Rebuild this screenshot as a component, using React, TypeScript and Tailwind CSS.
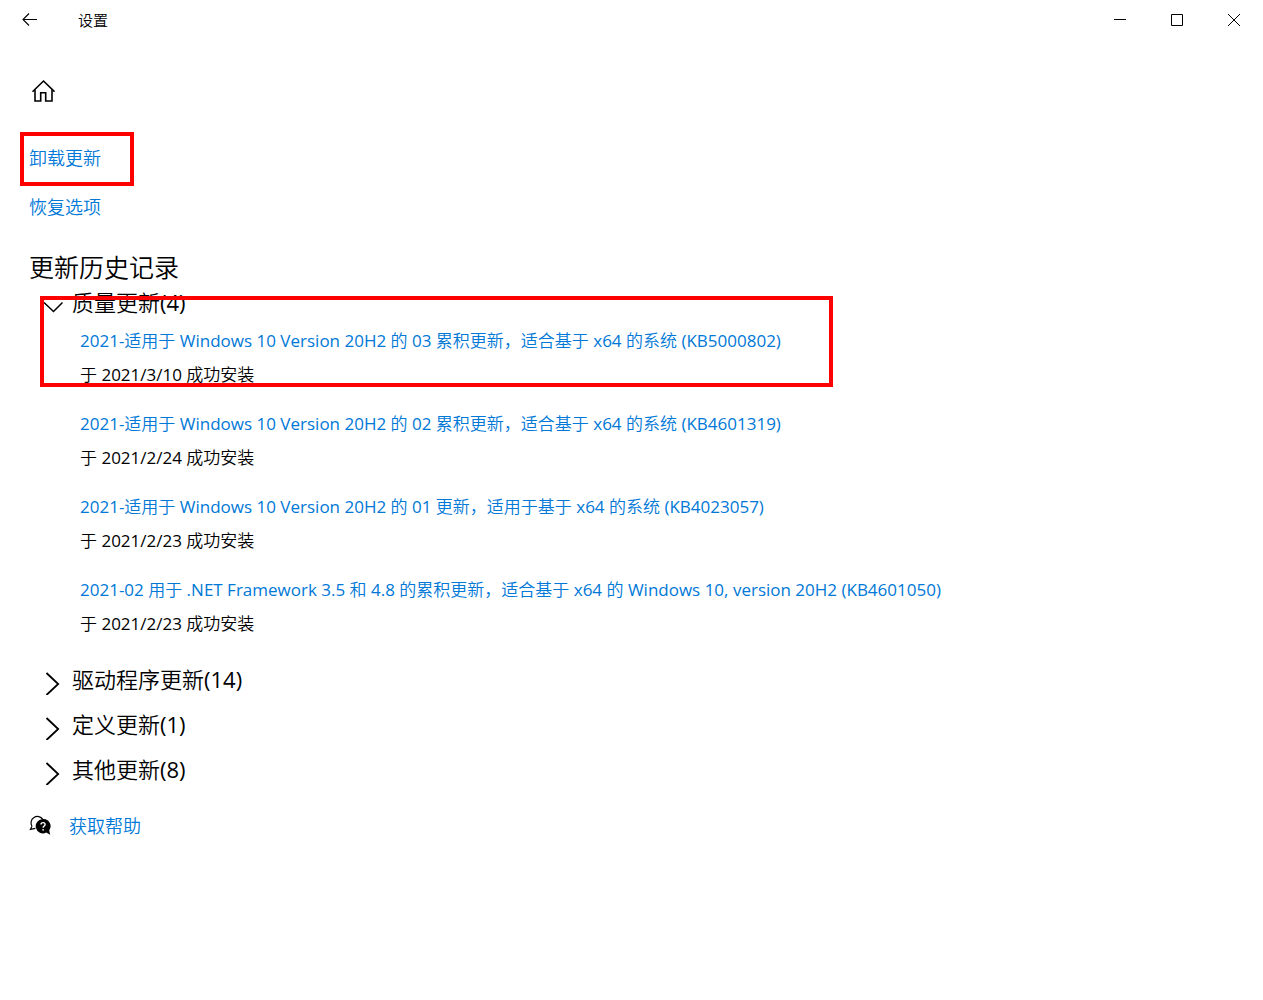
const qualityUpdates = [
  {
    title: '2021-适用于 Windows 10 Version 20H2 的 03 累积更新，适合基于 x64 的系统 (KB5000802)',
    status: '于 2021/3/10 成功安装',
    highlighted: true,
  },
  {
    title: '2021-适用于 Windows 10 Version 20H2 的 02 累积更新，适合基于 x64 的系统 (KB4601319)',
    status: '于 2021/2/24 成功安装',
  },
  {
    title: '2021-适用于 Windows 10 Version 20H2 的 01 更新，适用于基于 x64 的系统 (KB4023057)',
    status: '于 2021/2/23 成功安装',
  },
  {
    title: '2021-02 用于 .NET Framework 3.5 和 4.8 的累积更新，适合基于 x64 的 Windows 10, version 20H2 (KB4601050)',
    status: '于 2021/2/23 成功安装',
  },
];

const collapsedSections = ['驱动程序更新(14)', '定义更新(1)', '其他更新(8)'];

function BackIcon() {
  return (
    <svg width="16" height="14" viewBox="0 0 16 14" fill="none" stroke="currentColor" strokeWidth="1.1" aria-hidden="true">
      <path d="M15 6.5H.8M7 .5l-6 6 6 6" />
    </svg>
  );
}

function HomeIcon() {
  return (
    <svg width="26" height="24" viewBox="0 0 26 24" fill="none" stroke="currentColor" strokeWidth="1.6" aria-hidden="true">
      <path d="M3.5 12.7L14.5 2l11 10.7" />
      <path d="M6 10.8V22h5.7v-8.2h5V22H23V10.8" />
    </svg>
  );
}

function ChevronDownIcon() {
  return (
    <svg width="20" height="24" viewBox="0 0 20 24" fill="none" stroke="currentColor" strokeWidth="1.5" aria-hidden="true">
      <path d="M1 12.5l9.5 9 9-9" />
    </svg>
  );
}

function ChevronRightIcon() {
  return (
    <svg width="20" height="32" viewBox="0 0 20 32" fill="none" stroke="currentColor" strokeWidth="1.8" aria-hidden="true">
      <path d="M3.5 10l11.7 11L3.5 32" />
    </svg>
  );
}

function HelpIcon() {
  return (
    <svg width="22" height="22" viewBox="0 0 22 22" aria-hidden="true">
      <path d="M3 11.2A6.3 6.3 0 1 1 13.8 4.4M3 11.2L1.4 14.4l5-1" fill="none" stroke="currentColor" strokeWidth="1.2" />
      <path d="M14 4a7.2 7.2 0 1 0 3.2 13.6l4 2.2-1-4.4A7.2 7.2 0 0 0 14 4z" fill="currentColor" />
      <path d="M12 9.5c0-2.6 4.1-2.5 4.1 0 0 1.5-2 1.6-2 3.3" fill="none" stroke="white" strokeWidth="1.4" />
      <circle cx="14.1" cy="14.8" r="0.9" fill="white" />
    </svg>
  );
}

function TitleBar() {
  return (
    <header className="flex h-10 items-center">
      <button type="button" aria-label="返回" className="flex h-10 w-[59px] items-center justify-center">
        <BackIcon />
      </button>
      <h1 className="ml-[19px] text-[15px] leading-6">设置</h1>
      <div className="ml-auto flex">
        <button type="button" aria-label="最小化" className="flex h-10 w-[57px] items-center justify-center">
          <svg width="13" height="13" viewBox="0 0 13 13" stroke="currentColor" aria-hidden="true">
            <path d="M0 5.5h12" />
          </svg>
        </button>
        <button type="button" aria-label="最大化" className="flex h-10 w-[57px] items-center justify-center">
          <svg width="13" height="13" viewBox="0 0 13 13" fill="none" stroke="currentColor" aria-hidden="true">
            <path d="M.5.5h11v11H.5z" />
          </svg>
        </button>
        <button type="button" aria-label="关闭" className="flex h-10 w-[57px] items-center justify-center">
          <svg width="13" height="13" viewBox="0 0 13 13" stroke="currentColor" aria-hidden="true">
            <path d="M0 0l12 12M12 0L0 12" />
          </svg>
        </button>
      </div>
    </header>
  );
}

export default function App() {
  return (
    <div className="min-h-screen bg-white font-['Open_Sans','Noto_Sans_CJK_SC_DemiLight','Noto_Sans_CJK_SC',sans-serif] text-black">
      <TitleBar />
      <main className="px-[29px] pt-[39px]">
        <button type="button" aria-label="主页" className="block">
          <HomeIcon />
        </button>

        <nav className="mt-[43px] flex flex-col items-start gap-[25px] text-[18px] leading-6 text-[#0078d7]">
          <a href="#uninstall" className="relative">
            卸载更新
            <span className="absolute -top-3.5 -left-[9px] h-[54px] w-[114px] border-4 border-[#ff0000]" aria-hidden="true" />
          </a>
          <a href="#recovery">恢复选项</a>
        </nav>

        <h2 className="mt-8 text-[25px] leading-8">更新历史记录</h2>

        <section className="mt-px">
          <button type="button" aria-expanded="true" className="flex h-9 items-center gap-[9px] pl-3.5 text-[22px]">
            <ChevronDownIcon />
            质量更新(4)
          </button>
          <ul className="mt-[9px] flex flex-col gap-[25px] pl-[51px] text-[17px] leading-6">
            {qualityUpdates.map((u) => (
              <li key={u.title} className="relative">
                <a href="#update" className="text-[#0078d7]">{u.title}</a>
                <p className="mt-2.5">{u.status}</p>
                {u.highlighted && (
                  <span className="absolute -top-[33px] -left-10 h-[91px] w-[793px] border-4 border-[#ff0000]" aria-hidden="true" />
                )}
              </li>
            ))}
          </ul>
        </section>

        <div className="mt-[25px] flex flex-col items-start gap-[9px]">
          {collapsedSections.map((title) => (
            <button key={title} type="button" aria-expanded="false" className="flex h-9 items-center gap-[9px] pl-3.5 text-[22px]">
              <ChevronRightIcon />
              {title}
            </button>
          ))}
        </div>

        <a href="#help" className="mt-[27px] inline-flex items-center gap-[18px] text-[18px] leading-6 text-[#0078d7]">
          <span className="text-black">
            <HelpIcon />
          </span>
          获取帮助
        </a>
      </main>
    </div>
  );
}
